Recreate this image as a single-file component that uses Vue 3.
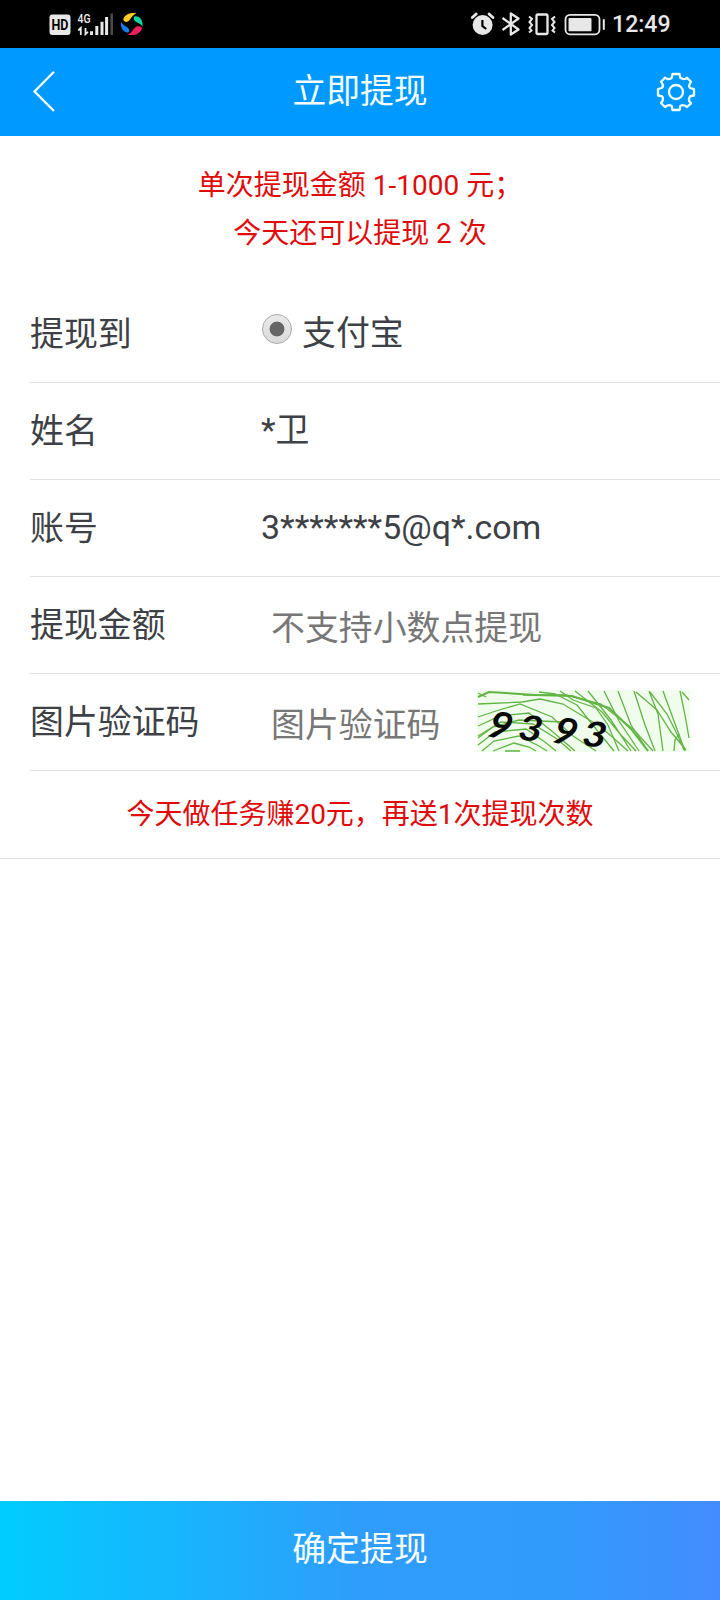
<script setup>
const account = [
  { label: '姓名', value: '*卫' },
  { label: '账号', value: '3*******5@q*.com' },
]
</script>

<template>
  <div class="screen">
    <div class="status">
      <svg class="status-left" width="110" height="48" viewBox="40 0 110 48">
        <rect x="49.5" y="14.5" width="21" height="20.5" rx="3" fill="#e8e8e8" />
        <text x="60" y="29.7" font-size="14" font-weight="700" text-anchor="middle" textLength="17" lengthAdjust="spacingAndGlyphs" fill="#000">HD</text>
        <text x="77.5" y="22.5" font-size="12.5" font-weight="500" textLength="13" lengthAdjust="spacingAndGlyphs" fill="#e8e8e8">4G</text>
        <path d="M78.3 30.5L80.8 28V35M85.5 28V34.2L88 31.8" fill="none" stroke="#e8e8e8" stroke-width="1.8" />
        <path d="M91.5 35V31.2M96.8 35V26M102 35V21.8M106.6 35V17" stroke="#e8e8e8" stroke-width="3" />
        <path d="M111.7 35V13.5" stroke="#484848" stroke-width="2.6" />
        <path d="M123.3 18.8C125.5 14 131 12 136.5 13.5C131 15 130.5 21.5 126.5 22C124.5 22 123 20.700 123.300 18.800Z" fill="#ffc928" />
        <path d="M134.8 16.200C139.500 15.500 143.300 20 142.500 26.500C140.500 22.800 134.500 22.500 133.800 19.200C133.500 17.800 134 16.800 134.800 16.200Z" fill="#0fd49b" />
        <path d="M121.300 21C120.800 25.500 129.500 26.500 129.300 30.500C129.200 33 126.500 33 125 31.800C121.500 29.500 120 25 121.300 21Z" fill="#1180f5" />
        <path d="M142 28C141 33 134 37 127.500 34.200C133 33.500 133.200 27 137.500 26.300C139.500 26.200 141.500 26.600 142 28Z" fill="#f51e5b" />
      </svg>
      <svg class="status-right" width="150" height="48" viewBox="466 0 150 48" fill="none" stroke="#e8e8e8">
        <circle cx="482.600" cy="25" r="10" fill="#e8e8e8" stroke="none" />
        <path d="M472.300 17.500L476.200 14M493 17.500L489 14" stroke-width="2.800" stroke-linecap="round" />
        <path d="M482.400 20V26L486.200 29" stroke="#000" stroke-width="2.200" />
        <path d="M502.500 18L518.500 29.500L510.800 34.500V13.500L518.500 18.500L502.500 30" stroke-width="2.300" stroke-linejoin="round" />
        <rect x="536.500" y="14.500" width="11" height="19.500" rx="1.500" stroke-width="2.300" />
        <path d="M529 16.500L532 19L529.500 22L532 25L529.500 28L531.500 30.500L529 32.500M555 16.500L552 19L554.500 22L552 25L554.500 28L552.500 30.500L555 32.500" stroke-width="2" />
        <rect x="565.500" y="14.800" width="34" height="19.500" rx="4.500" stroke-width="1.800" />
        <rect x="568.500" y="18" width="23" height="13.200" rx="1" fill="#e8e8e8" stroke="none" />
        <path d="M603.800 20V29" stroke-width="2" stroke-linecap="round" />
      </svg>
      <span class="clock">12:49</span>
    </div>

    <header class="header">
      <svg class="back" width="26" height="44" viewBox="0 0 26 44"><path d="M22 1.800L2.500 21.500L22 41" fill="none" stroke="#f4fdff" stroke-width="2.300" /></svg>
      <h1 class="title">立即提现</h1>
      <svg class="gear" width="40" height="40" viewBox="-20 -20 40 40" fill="none" stroke="#f0fcff" stroke-width="2.300" stroke-linejoin="round">
        <circle r="7" />
        <path d="M-3.500-18H3.500L4.300-14.200Q7-12.300 9.600-13.300L11-14.300L15-10.300L13.300-7.300Q12.600-5.300 14.200-3.900L18-3V3.500L14.200 4.200Q12.300 6.500 13.300 9.300L15 11.300L11 15L8.600 13.500Q5.500 12.500 4.200 14.200L3.500 18H-3.500L-4.200 14.200Q-6.500 12.500 -9 13.700L-11 15L-15 11L-13.300 8.500Q-12.500 5.500 -14.200 4.200L-18 3.500V-3L-14.200-4Q-12.500-5.500 -13.300-7.700L-15-10.300L-11-14.300L-8.500-13Q-5.500-12.500 -4.200-14.200Z" />
      </svg>
    </header>

    <div class="notice">
      <div>单次提现金额 1-1000 元；</div>
      <div>今天还可以提现 2 次</div>
    </div>

    <div class="form">
      <div class="row">
        <span class="label">提现到</span>
        <span class="radio"></span>
        <span>支付宝</span>
      </div>
      <div v-for="item in account" :key="item.label" class="row">
        <span class="label">{{ item.label }}</span>
        <span>{{ item.value }}</span>
      </div>
      <div class="row">
        <span class="label">提现金额</span>
        <input class="field" placeholder="不支持小数点提现" />
      </div>
      <div class="row">
        <span class="label">图片验证码</span>
        <input class="field code" placeholder="图片验证码" />
        <svg class="captcha" width="213" height="62" viewBox="0 0 213 62">
          <rect width="213" height="62" fill="#f0fdec" />
          <g fill="none" stroke="#63b346" stroke-width="1.300">
            <path d="M1 7L12 2L58 5L95 6L132 18L154 39L171 61" stroke-width="2" />
            <path d="M1 14L45 12L63 9L86 14L124 37L151 61M46 5H89L124 14L157 40L176 61" />
            <path d="M1 27L19 21L43 14L75 27L96 46L119 61M1 36L23 26L52 23L76 42L98 61" />
            <path d="M1 46L24 32L56 34L80 49L94 61M1 55L18 42L49 39L68 52L79 61M5 61L17 51L42 46L62 56L70 61" />
            <path d="M16 61L37 53L52 57L59 61M28 61H43M1 48L16 37L42 30L86 32" />
            <path d="M62 2L78 4L100 15L119 39L137 61M83 1L96 10L119 18L131 35L142 61" />
            <path d="M98 1L125 22L144 45L159 61M111 1L134 30L154 61M127 1L142 31L162 61M141 1L154 35L171 61" />
            <path d="M157 1L168 35L178 61M172 1L181 24L186 61M186 1L197 31L208 61M203 1L208 25L212 48" />
            <path d="M159 2L180 20L194 42L209 60M173 2L190 24L201 46L207 60M197 61L198 50L202 44" />
            <path d="M205 2L212 10M1 3L9 7" />
          </g>
          <g class="captcha-digits">
            <text transform="translate(8 45) rotate(18) scale(1.15 1.1)">9</text>
            <text transform="translate(40 49) rotate(8) scale(1.2 1)">3</text>
            <text transform="translate(73 51) rotate(18) scale(1.15 1.1)">9</text>
            <text transform="translate(104 55) rotate(8) scale(1.2 1)">3</text>
          </g>
        </svg>
      </div>
    </div>
    <div class="promo">今天做任务赚20元，再送1次提现次数</div>
    <button class="submit">确定提现</button>
  </div>
</template>

<style>
body {
  margin: 0;
}
</style>

<style scoped>
.screen {
  display: flex;
  flex-direction: column;
  width: 720px;
  height: 1600px;
  overflow: hidden;
  background: #fff;
  color: #3d4145;
  font-family: Roboto, "Noto Sans CJK SC", sans-serif;
  font-size: 33.9px;
}
.status {
  display: flex;
  box-sizing: border-box;
  height: 48px;
  flex: none;
  padding-left: 40px;
  background: #000;
}
.status-right {
  margin-left: 316px;
}
.clock {
  margin-left: -4px;
  color: #e8e8e8;
  font-size: 23.1px;
  font-weight: 500;
  line-height: 50px;
}
.header {
  display: flex;
  align-items: center;
  justify-content: space-between;
  box-sizing: border-box;
  height: 88px;
  flex: none;
  padding: 0 24px 0 32px;
  background: #09f;
}
.gear {
  margin-left: -14px;
}
.title {
  margin: 0 8px 0 0;
  color: #f8feff;
  font-size: 33.8px;
  font-weight: 400;
  line-height: 84px;
}
.notice {
  box-sizing: border-box;
  height: 150px;
  flex: none;
  padding-top: 26px;
  color: #e00b0b;
  font-size: 28px;
  line-height: 48px;
  text-align: center;
}
.form {
  padding-left: 30px;
}
.row {
  display: flex;
  align-items: center;
  box-sizing: border-box;
  height: 97px;
  border-bottom: 1px solid #e2e2e2;
  line-height: 48px;
}
.label {
  width: 231px;
  flex: none;
  padding-top: 2px;
}
.radio {
  box-sizing: border-box;
  width: 30px;
  height: 30px;
  margin: -10px 10px 0 1px;
  border: 1px solid #aaa;
  border-radius: 50%;
  background: radial-gradient(circle, #666 0 7px, transparent 7.8px), linear-gradient(#eaeaea, #dadada);
}
.field {
  width: 400px;
  height: 60px;
  margin: 6px 0 0 10px;
  padding: 0;
  border: 0;
  outline: 0;
  background: transparent;
  color: #3d4145;
  font: inherit;
}
.field.code {
  width: 190px;
}
.field::placeholder {
  color: #777;
  opacity: 1;
}
.captcha {
  flex: none;
  margin: 0 0 2px 16px;
}
.captcha-digits {
  fill: #080808;
  font: italic 700 35px Lato, sans-serif;
}
.promo {
  box-sizing: border-box;
  height: 88px;
  flex: none;
  border-bottom: 1px solid #e2e2e2;
  color: #e00b0b;
  font-size: 28px;
  line-height: 88px;
  text-align: center;
}
.submit {
  height: 99px;
  flex: none;
  margin-top: auto;
  padding: 0 0 2px;
  border: 0;
  background: linear-gradient(90deg, #00cdff 0%, #2f9dfb 50%, #319bfb 78%, #438cff 100%);
  color: #f8feff;
  font: inherit;
  line-height: 95px;
}
</style>
